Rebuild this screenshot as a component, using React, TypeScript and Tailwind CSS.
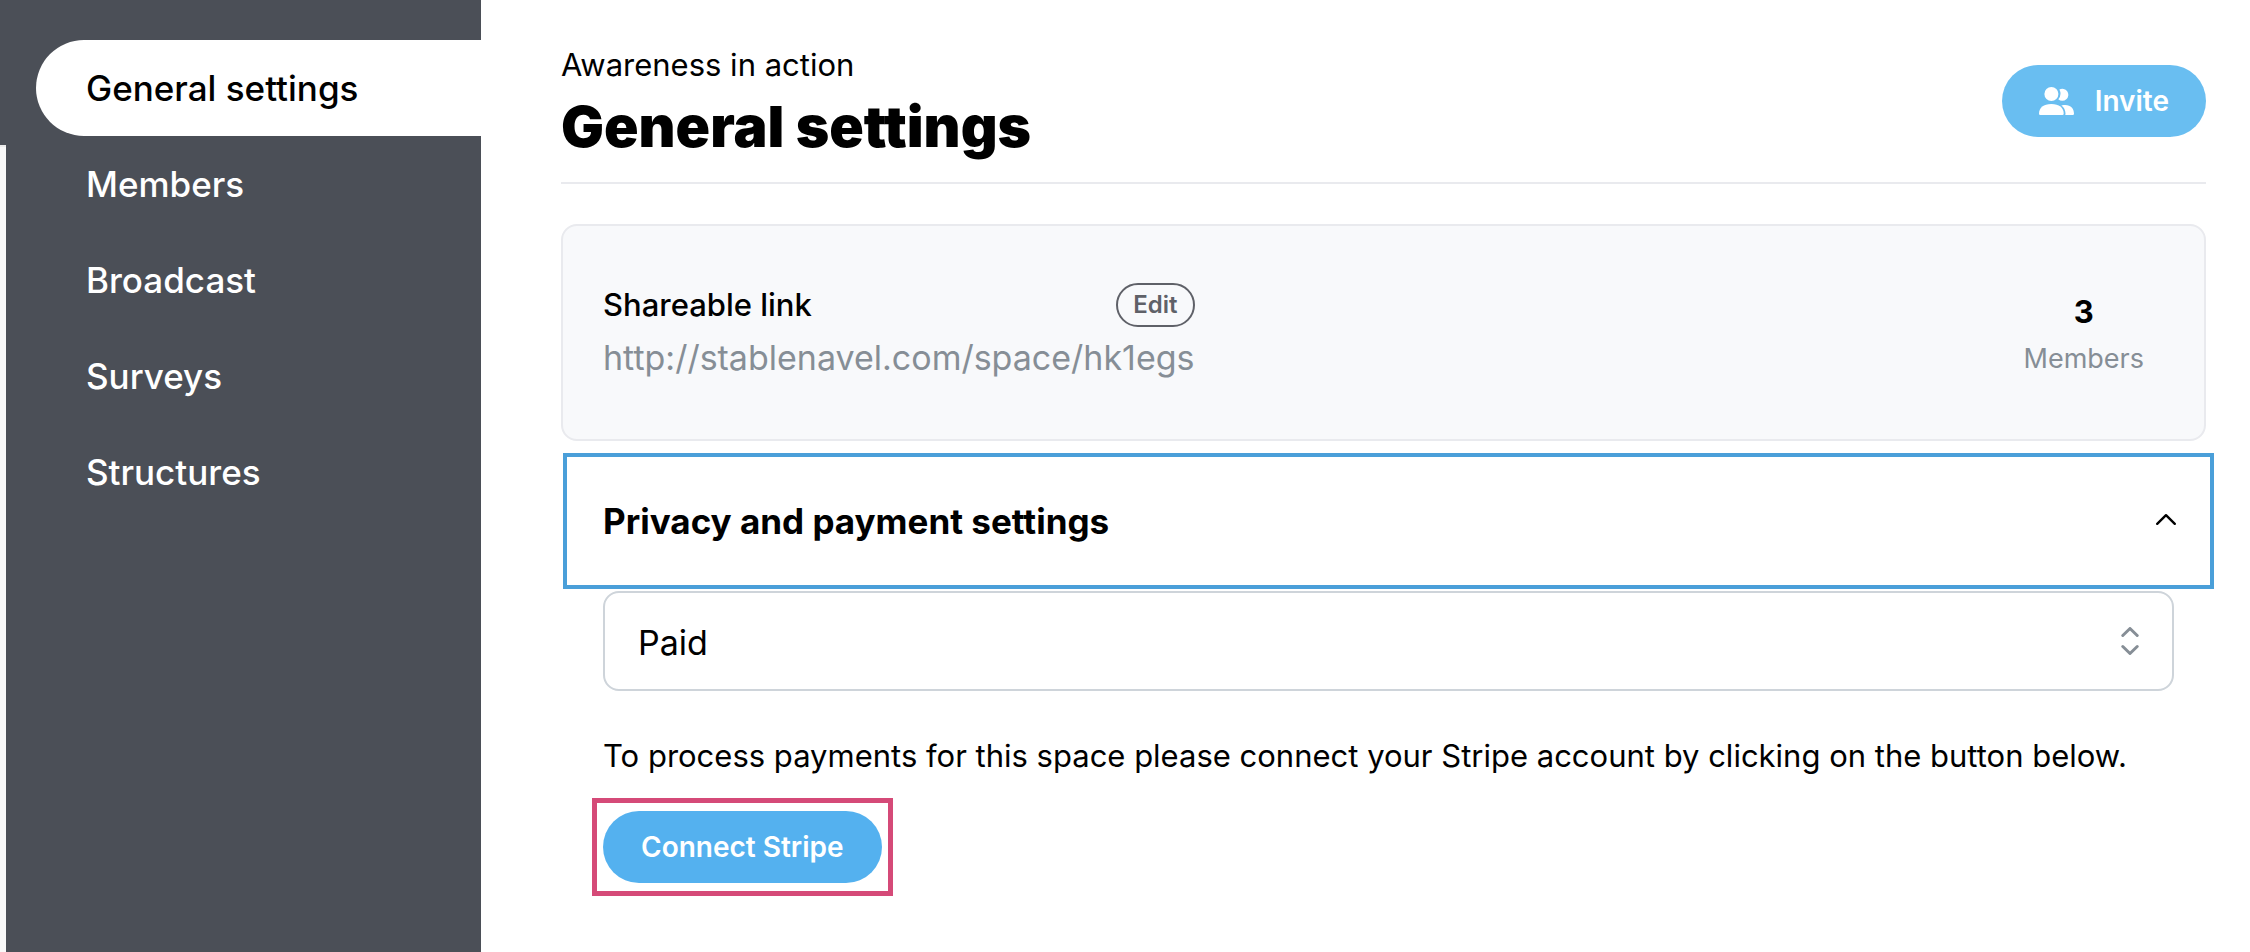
const navItems = ["General settings", "Members", "Broadcast", "Surveys", "Structures"];

function PeopleIcon() {
  return (
    <svg className="h-7 w-9" viewBox="0 0 36 28" fill="currentColor" aria-hidden="true">
      <circle cx="12.4" cy="7" r="7" />
      <path d="M20.4 2.6 A6 6 0 1 1 19.3 12.3 A8.8 8.8 0 0 0 20.4 2.6 Z" />
      <path d="M1.2 28 Q0 28 0 26.8 C0 20.6 4.5 17 12.3 17 C20.2 17 24.7 20.6 24.7 26.8 Q24.7 28 23.5 28 Z" />
      <path d="M22.3 18.4 C24 18 25.2 17.9 26.2 17.9 C32 17.9 35 21.4 35 26.8 Q35 28 33.8 28 H26.2 Q26.6 27.3 26.5 26.2 C26.3 22.8 25 20.2 22.3 18.4 Z" />
    </svg>
  );
}

function Sidebar() {
  return (
    <aside className="flex w-[481px] shrink-0 bg-[#4b4f57]">
      <div className="flex w-1.5 shrink-0 flex-col">
        <div className="h-[145px]" />
        <div className="grow border-t-2 border-[#ececec] bg-[#f9f9f9]" />
      </div>
      <nav className="flex grow flex-col pt-10 pl-[30px]" aria-label="Space settings">
        {navItems.map((item, i) => (
          <a
            key={item}
            href="#"
            aria-current={i === 0 ? "page" : undefined}
            className={
              i === 0
                ? "rounded-l-full bg-white py-5 pl-[50px] text-[35px] leading-[56px] font-medium text-black"
                : "rounded-l-full py-5 pl-[50px] text-[35px] leading-[56px] font-medium text-white"
            }
          >
            {item}
          </a>
        ))}
      </nav>
    </aside>
  );
}

export default function App() {
  return (
    <div className="flex min-h-screen bg-white font-['Inter',sans-serif] text-black">
      <Sidebar />
      <main className="grow pt-5 pr-11 pl-20">
        <header className="flex items-center justify-between border-b-2 border-[#e9eaee]">
          <div className="pt-5 pb-6">
            <p className="text-[31px] leading-[50px]">Awareness in action</p>
            <h1 className="mt-1.5 text-[57px] leading-[62px] font-black">General settings</h1>
          </div>
          <button className="flex h-[72px] items-center gap-5 rounded-full bg-[#69bef1] px-[37px] text-[28px] font-semibold text-white">
            <PeopleIcon />
            Invite
          </button>
        </header>

        <section className="mt-10 flex items-center justify-between rounded-2xl border-2 border-[#e9eaee] bg-[#f8f9fb] px-10 pt-[57px] pb-[54px]">
          <div>
            <div className="flex items-center justify-between">
              <h2 className="text-[31px] leading-[44px] font-medium">Shareable link</h2>
              <button className="h-11 rounded-full border-2 border-[#5f6168] px-[15px] text-2xl leading-[40px] font-semibold text-[#5f6168]">
                Edit
              </button>
            </div>
            <p className="mt-1 text-[34px] leading-[54px] text-[#868e96]">http://stablenavel.com/space/hk1egs</p>
          </div>
          <div className="flex flex-col items-center gap-0.5 px-5">
            <span className="text-[31px] leading-[48px] font-bold">3</span>
            <span className="text-[27px] leading-[42px] text-[#868e96]">Members</span>
          </div>
        </section>

        <section className="mt-3">
          <h2 className="-mr-2 ml-0.5">
            <button
              aria-expanded="true"
              aria-controls="payment-panel"
              className="flex w-full items-center justify-between border-4 border-[#4a9fd9] py-[37px] pr-8 pl-9 text-[35px] leading-[54px] font-bold"
            >
              Privacy and payment settings
              <svg className="size-6" viewBox="0 0 24 24" fill="none" stroke="currentColor" strokeWidth="2.4" strokeLinecap="round" strokeLinejoin="round" aria-hidden="true">
                <path d="M3.2 14.8 L12 6.2 L20.8 14.8" />
              </svg>
            </button>
          </h2>
          <div id="payment-panel">
            <div className="relative mt-0.5 mr-8 ml-[42px]">
              <select
                aria-label="Space pricing"
                defaultValue="Paid"
                className="h-[100px] w-full appearance-none rounded-2xl border-2 border-[#ced4da] bg-white px-[33px] pt-0.5 text-[34px]"
              >
                <option>Paid</option>
              </select>
              <svg className="pointer-events-none absolute top-9 right-8 h-7 w-6" viewBox="0 0 24 28" fill="none" stroke="#868e96" strokeWidth="3" strokeLinecap="round" strokeLinejoin="round" aria-hidden="true">
                <path d="M4.8 8.5 L12 1.5 L19.2 8.5 M4.8 19.5 L12 26.5 L19.2 19.5" />
              </svg>
            </div>
            <p className="mt-10 ml-[42px] text-[31px] leading-[50px]">
              To process payments for this space please connect your Stripe account by clicking on the button below.
            </p>
            <div className="mt-[17px] ml-[31px] flex w-fit border-5 border-[#d54a78] px-1.5 py-2">
              <button className="h-[72px] rounded-full bg-[#54b1ef] px-[38px] text-[28px] font-semibold text-white">
                Connect Stripe
              </button>
            </div>
          </div>
        </section>
      </main>
    </div>
  );
}
